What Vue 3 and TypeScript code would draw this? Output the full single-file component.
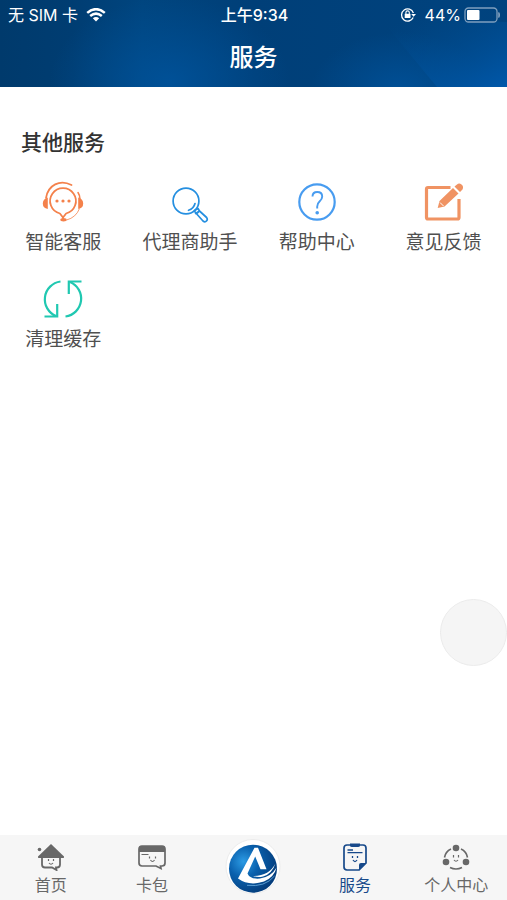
<script setup lang="ts">
import { ref } from 'vue'

type ServiceIcon = 'support' | 'search' | 'help' | 'feedback' | 'refresh'
type TabIcon = 'home' | 'card' | 'logo' | 'service' | 'profile'

interface Service {
  icon: ServiceIcon
  label: string
}

interface Tab {
  icon: TabIcon
  label: string
}

const services: Service[] = [
  { icon: 'support', label: '智能客服' },
  { icon: 'search', label: '代理商助手' },
  { icon: 'help', label: '帮助中心' },
  { icon: 'feedback', label: '意见反馈' },
  { icon: 'refresh', label: '清理缓存' },
]

const tabs: Tab[] = [
  { icon: 'home', label: '首页' },
  { icon: 'card', label: '卡包' },
  { icon: 'logo', label: '' },
  { icon: 'service', label: '服务' },
  { icon: 'profile', label: '个人中心' },
]

const active = ref<TabIcon>('service')
</script>

<template>
  <div class="screen">
    <header class="header">
      <svg class="header-art" viewBox="0 0 507 87" preserveAspectRatio="none" aria-hidden="true">
        <defs>
          <linearGradient id="base" x1="0" x2="1" y1="0" y2="0">
            <stop offset="0" stop-color="#003a6c" />
            <stop offset=".14" stop-color="#003d72" />
            <stop offset=".28" stop-color="#00457f" />
            <stop offset=".5" stop-color="#003f78" />
            <stop offset="1" stop-color="#00437f" />
          </linearGradient>
          <radialGradient id="glow">
            <stop offset="0" stop-color="#0056a2" stop-opacity=".7" />
            <stop offset="1" stop-color="#0055a0" stop-opacity="0" />
          </radialGradient>
          <linearGradient id="beam" x1="0" x2="1" y1="0" y2="1">
            <stop offset=".1" stop-color="#004a8c" stop-opacity="0" />
            <stop offset="1" stop-color="#0058aa" />
          </linearGradient>
        </defs>
        <rect width="507" height="87" fill="url(#base)" />
        <ellipse cx="170" cy="82" rx="120" ry="85" fill="url(#glow)" />
        <ellipse cx="400" cy="92" rx="90" ry="60" fill="url(#glow)" />
        <path d="M380 18Q408 52 437 87H507V22Z" fill="url(#beam)" />
      </svg>
      <div class="status">
        <span class="carrier">
          <span>无 SIM 卡</span>
          <svg width="20" height="14" viewBox="0 0 20 14" fill="none" stroke="#fff" aria-hidden="true">
            <path d="M1.2 4.9Q10-2.6 18.8 4.9M4.2 8Q10 3.2 15.8 8" stroke-width="2.5" />
            <path d="M6.8 10.3Q10 7.9 13.2 10.3L10 13.6Z" fill="#fff" stroke="none" />
          </svg>
        </span>
        <span class="time">上午9:34</span>
        <span class="battery">
          <svg class="lock" width="16" height="16" viewBox="0 0 16 16" fill="none" stroke="#fff" aria-hidden="true">
            <path d="M13.2 10.6A6.1 6.1 0 1 1 13.4 6" stroke-width="1.3" />
            <path d="M11.2 7H16L13.6 9.8Z" fill="#fff" stroke="none" />
            <rect x="4.7" y="6.8" width="5.8" height="4.2" fill="#fff" stroke="none" />
            <path d="M5.9 7V5.6a1.7 1.7 0 0 1 3.4 0V7" stroke-width="1.1" />
          </svg>
          <span>44%</span>
          <svg width="37" height="16" viewBox="0 0 37 16" aria-hidden="true">
            <rect x="1" y="1" width="32" height="14" rx="3.5" fill="none" stroke="#7f9fbe" stroke-width="1.3" />
            <path d="M34.8 5.5q1.6 2.5 0 5Z" fill="#7f9fbe" stroke="#7f9fbe" />
            <rect x="3" y="3" width="12.5" height="10" rx="1" fill="#fff" />
          </svg>
        </span>
      </div>
      <h1 class="title">服务</h1>
    </header>

    <main class="content">
      <h2 class="section-title">其他服务</h2>
      <div class="grid">
        <button v-for="item in services" :key="item.icon" class="service" type="button">
          <svg v-if="item.icon === 'support'" class="service-icon" viewBox="0 0 42 42" fill="none" stroke="#f4814b" aria-hidden="true">
            <path d="M17.9 32.5A12.9 12.9 0 1 1 24.1 32.5L21 36.5Z" fill="#fff" stroke-width="1.8" stroke-linejoin="round" />
            <path d="M4 17C6 4 18-2 29.500 4" stroke-width="1.700" stroke-linecap="round" />
            <path d="M36 11.500Q38 14.500 38 18" stroke-width="1.500" stroke-linecap="round" />
            <path d="M5.800 16.500V28Q.8 27 .8 22.500T5.800 16.500ZM36.200 16.500V28Q41.200 27 41.200 22.500T36.200 16.500Z" fill="#f4814b" stroke="none" />
            <path d="M37.500 27.500Q34 36.500 24.500 39" stroke-width=".8" />
            <ellipse cx="21.500" cy="38.800" rx="3.200" ry="1.700" fill="#f4814b" stroke="none" />
            <path d="M21 35v4" stroke-width="1.500" />
            <g fill="#f4814b" stroke="none">
              <circle cx="15" cy="20" r="1.600" />
              <circle cx="21" cy="20" r="1.600" />
              <circle cx="27" cy="20" r="1.600" />
            </g>
          </svg>
          <svg v-else-if="item.icon === 'search'" class="service-icon" viewBox="0 0 42 42" fill="none" stroke="#258fe0" stroke-width="1.700" stroke-linejoin="round" aria-hidden="true">
            <circle cx="17" cy="20" r="12.900" />
            <path d="M26 22.500Q24.700 27.800 19.500 29.300" stroke-linecap="round" />
            <path d="M25.500 29.500 29 27.500 30.500 30 26.700 32.500ZM30.500 30 37.600 36.500Q39 38.400 37.500 40T34 40L27.500 32.800Z" />
          </svg>
          <svg v-else-if="item.icon === 'help'" class="service-icon" viewBox="0 0 42 42" fill="none" stroke="#489cf0" aria-hidden="true">
            <circle cx="21" cy="21" r="17.700" stroke-width="2.200" />
            <path d="M16.500 15.500Q16.600 11 21.200 11 26.200 11 26.200 15.500 26.200 18 23.700 20.200 21.200 22.500 21.200 25.500V27.500" stroke-width="1.900" />
            <circle cx="21.200" cy="31.800" r="1.800" fill="#489cf0" stroke="none" />
          </svg>
          <svg v-else-if="item.icon === 'feedback'" class="service-icon" viewBox="0 0 42 42" fill="none" stroke="#f09363" aria-hidden="true">
            <path d="M27.500 6.500H5Q3.500 6.500 3.500 8V36.500Q3.500 38 5 38H34.500Q36 38 36 36.500V18" stroke-width="3.200" />
            <path d="M14.700 27 16.500 20 30 7 35.500 12.500 21.500 25.500ZM31.500 5.500 34 3.500Q36 1.500 38.500 3.500T39.500 8.500L37 11Z" fill="#f09363" stroke="none" />
            <path d="m17 21.500 3.500 3.500" stroke="#fff" stroke-width="1" />
          </svg>
          <svg v-else class="service-icon" viewBox="0 0 42 42" fill="none" stroke="#20c8b1" stroke-width="2.200" aria-hidden="true">
            <path d="M18.500 3.500A18 18 0 0 0 14 38" />
            <path d="M2.500 38.500H15.200V26" />
            <path d="M23.500 38.500A18 18 0 0 0 28 4" />
            <path d="M39.500 3.500H26.800V16" />
          </svg>
          <span>{{ item.label }}</span>
        </button>
      </div>
    </main>

    <button class="floating" type="button" aria-label="悬浮按钮"></button>

    <nav class="tabbar">
      <button
        v-for="tab in tabs"
        :key="tab.icon"
        class="tab"
        :class="{ active: active === tab.icon, center: tab.icon === 'logo' }"
        type="button"
        :aria-label="tab.label || '主页'"
        @click="active = tab.icon"
      >
        <svg v-if="tab.icon === 'home'" class="tab-icon" viewBox="0 0 30 28" fill="none" stroke="currentColor" aria-hidden="true">
          <path d="M15 1 2 13.500Q1.500 15 3 15H27Q28.500 15 28 13.500Z" fill="currentColor" stroke="none" />
          <path d="M6 14V21.500Q6 24.500 9 24.500H16L20.500 27 20 24.500H21Q24 24.500 24 21.500V14" stroke-width="1.800" />
          <circle cx="3.500" cy="6.500" r="1.800" fill="currentColor" stroke="none" />
          <path d="M12.500 16v2M17.500 16v2M13 20q2 2.500 4 0" stroke-width="1.200" />
        </svg>
        <svg v-else-if="tab.icon === 'card'" class="tab-icon" viewBox="0 0 30 28" fill="none" stroke="currentColor" aria-hidden="true">
          <path d="M5 3H25Q28 3 28 6V20Q28 23 25 23H23.500L24 25.500 19 23H5Q2 23 2 20V6Q2 3 5 3Z" stroke-width="1.700" />
          <path d="M2 9V5Q2 3 5 3H25Q28 3 28 5V9Z" fill="currentColor" stroke="none" />
          <path d="M4.500 11.500h7M12.500 13.500v2M18.500 13.500v2M13.500 17q2 3 4 0" stroke-width="1.200" />
        </svg>
        <svg v-else-if="tab.icon === 'logo'" class="logo" viewBox="0 0 56 56" aria-hidden="true">
          <defs>
            <radialGradient id="ball" cx=".3" cy=".35" r=".72">
              <stop offset="0" stop-color="#2c9be4" />
              <stop offset=".45" stop-color="#0960ad" />
              <stop offset="1" stop-color="#043d7c" />
            </radialGradient>
          </defs>
          <circle cx="28" cy="27.500" r="27" fill="#fff" stroke="#ececec" />
          <circle cx="28" cy="29.700" r="24" fill="url(#ball)" />
          <path d="M29.500 8.700H33L41.500 30.300H35.500L30.200 17.500 22.500 34.500Q25 40.500 35 39.500 46 38 51.600 28.500 49 38.500 39 42.500 24 47.500 13 39.500Z" fill="#fff" />
          <path d="M28 37Q44 37 50.500 24.500 47 35 38 37.500 33 38.800 28 37Z" fill="#fff" />
          <path d="M22 46.300Q40 48.500 49.500 37" fill="none" stroke="#6fb0e2" stroke-width=".8" />
        </svg>
        <svg v-else-if="tab.icon === 'service'" class="tab-icon" viewBox="0 0 30 28" fill="none" stroke="currentColor" aria-hidden="true">
          <path d="M7 2H23Q26 2 26 5V20L19 27H7Q4 27 4 24V5Q4 2 7 2Z" stroke-width="1.700" />
          <path d="M26.500 20H21Q19 20 19 22V27.500Z" fill="currentColor" stroke="none" />
          <path d="M10 0.500H20V2.500Q20 4 18 4H12Q10 4 10 2.500Z" fill="currentColor" stroke="none" />
          <path d="M7.500 7h5.500M7.500 9.700h15M12.500 13v2M17.500 13v2M13 17q2 3 4 0" stroke-width="1.300" />
        </svg>
        <svg v-else class="tab-icon" viewBox="0 0 30 28" fill="none" stroke="currentColor" aria-hidden="true">
          <path d="M10 6Q4.500 8.500 3.500 14.500M20 6Q25.500 8.500 26.500 14.500M9 24.500Q15 27.500 21 24.500" stroke-width="1.600" />
          <g fill="currentColor" stroke="none">
            <circle cx="15" cy="5" r="3.300" />
            <circle cx="5" cy="19" r="3.300" />
            <circle cx="25" cy="19" r="3.300" />
          </g>
          <path d="M12.500 12v2.500M17.500 12v2.500M13 17q2 2.500 4 0" stroke-width="1.200" />
        </svg>
        <span v-if="tab.label">{{ tab.label }}</span>
      </button>
    </nav>
  </div>
</template>

<style>
body {
  margin: 0;
  background: #fff;
}
</style>

<style scoped>
.screen {
  display: flex;
  flex-direction: column;
  min-height: 100vh;
  font-family: Inter, "Noto Sans CJK SC", sans-serif;
  color: #505050;
}

button {
  padding: 0;
  border: 0;
  background: none;
  color: inherit;
  font: inherit;
  cursor: pointer;
}

.header {
  position: relative;
  height: 87px;
  background: #003f76;
  color: #fff;
}

.header-art {
  position: absolute;
  inset: 0;
  width: 100%;
  height: 100%;
}

.status {
  position: relative;
  display: grid;
  grid-template-columns: 1fr auto 1fr;
  align-items: center;
  height: 30px;
  padding: 0 6px 0 8px;
  font-size: 16px;
  line-height: 30px;
}

.carrier,
.battery {
  display: flex;
  align-items: center;
  gap: 8px;
}

.battery {
  justify-content: flex-end;
  gap: 3px;
}

.lock {
  margin-right: 6px;
}

.time {
  font-weight: 500;
}

.title {
  position: relative;
  margin: 0;
  font-size: 24px;
  font-weight: 500;
  line-height: 56px;
  text-align: center;
}

.content {
  flex: 1;
  padding-top: 41px;
}

.section-title {
  margin: 0 0 23px;
  padding: 0 21px;
  font-size: 21px;
  font-weight: 500;
  line-height: 30px;
  color: #333;
}

.grid {
  display: grid;
  grid-template-columns: repeat(4, 1fr);
  row-gap: 21px;
}

.service {
  display: flex;
  flex-direction: column;
  align-items: center;
  gap: 6px;
  font-size: 19px;
  line-height: 28px;
  white-space: nowrap;
}

.service-icon {
  width: 42px;
  height: 42px;
}

.floating {
  position: fixed;
  right: 0;
  bottom: 234px;
  width: 67px;
  height: 67px;
  border: 1px solid #ebebeb;
  border-radius: 50%;
  background: #f5f5f5;
}

.tabbar {
  display: grid;
  grid-template-columns: repeat(5, 1fr);
  height: 65px;
  background: #f6f6f6;
}

.tab {
  display: flex;
  flex-direction: column;
  align-items: center;
  padding-top: 8px;
  font-size: 16px;
  line-height: 24px;
  color: #686868;
}

.tab.center {
  padding-top: 4px;
}

.tab.active {
  color: #17498a;
}

.tab-icon {
  width: 30px;
  height: 28px;
  margin-bottom: 2px;
}

.logo {
  width: 56px;
  height: 56px;
}
</style>
